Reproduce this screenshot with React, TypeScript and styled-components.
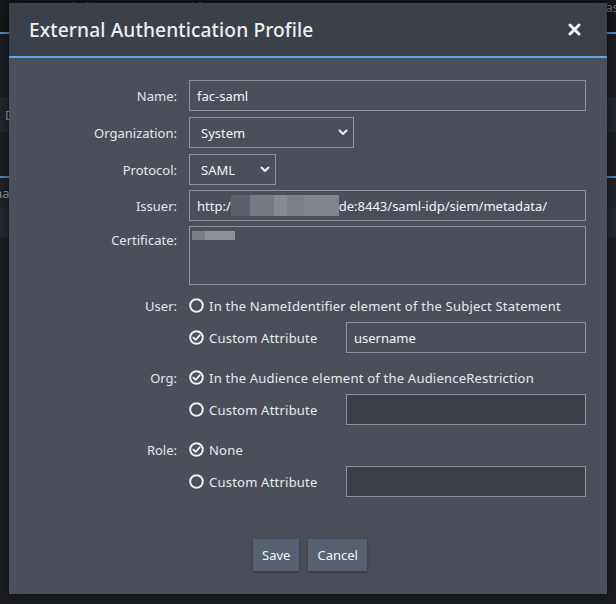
import React from 'react';
import styled, { createGlobalStyle } from 'styled-components';

const Global = createGlobalStyle`
  html, body { margin: 0; padding: 0; background: #1c1e23; }
  body { font-family: "Noto Sans", "DejaVu Sans", sans-serif; }
  #root { width: 616px; height: 604px; }
  * { box-sizing: border-box; }
`;

const Page = styled.div`
  position: relative;
  width: 616px;
  height: 604px;
  overflow: hidden;
  background: #1c1e23;
  display: flex;
  flex-direction: column;
`;

const TopNav = styled.div`
  height: 34px;
  flex: none;
  background: #16181c;
  border-bottom: 2px solid #4f8fd0;
  display: flex;
  gap: 70px;
  padding: 1px 0 0 55px;
  color: #70737a;
  font-size: 12px;
  line-height: 14px;
  overflow: hidden;
`;

const NavItem = styled.span`
  white-space: nowrap;
`;

const BackRow = styled.div<{ $bg: string; $h: number; $line?: boolean }>`
  height: ${(p) => p.$h}px;
  flex: none;
  background: ${(p) => p.$bg};
  border-bottom: ${(p) => (p.$line ? '2px solid #4a86c4' : 'none')};
  display: flex;
  align-items: center;
  color: #9a9da3;
  font-size: 13px;
  overflow: hidden;
`;

const BackText = styled.span<{ $x: number }>`
  margin-left: ${(p) => p.$x}px;
  white-space: nowrap;
`;

const Modal = styled.div`
  position: absolute;
  left: 9px;
  top: 3px;
  width: 598px;
  height: 591px;
  background: #4a4f5a;
  box-shadow: 0 0 12px rgba(0, 0, 0, 0.55);
  display: flex;
  flex-direction: column;
`;

const Header = styled.div`
  height: 55px;
  flex: none;
  background: #3b4049;
  border-bottom: 2px solid #5ea6ea;
  display: flex;
  align-items: center;
  justify-content: space-between;
  padding: 0 26px 0 20px;
`;

const Title = styled.h1`
  margin: 0;
  font-size: 19.2px;
  font-weight: 500;
  color: #eceef1;
  letter-spacing: 0.1px;
`;

const CloseButton = styled.button`
  border: none;
  background: none;
  padding: 0;
  width: 14px;
  height: 14px;
  display: flex;
  align-items: center;
  justify-content: center;
  cursor: pointer;
`;

const Body = styled.div`
  padding: 22px 21px 0 0;
  display: flex;
  flex-direction: column;
`;

const Row = styled.div<{ $mb: number; $top?: boolean }>`
  display: flex;
  align-items: ${(p) => (p.$top ? 'flex-start' : 'center')};
  margin-bottom: ${(p) => p.$mb}px;
`;

const Label = styled.label<{ $pt?: number }>`
  width: 180px;
  flex: none;
  padding-right: 12px;
  padding-top: ${(p) => p.$pt ?? 0}px;
  text-align: right;
  color: #e4e6ea;
  font-size: 13px;
`;

const TextBox = styled.div<{ $w: number; $dark?: boolean }>`
  width: ${(p) => p.$w}px;
  height: 31px;
  border: 1px solid #8e929b;
  background: ${(p) => (p.$dark ? '#3d4048' : '#4a4f5a')};
  color: #f4f5f7;
  font-size: 13px;
  padding: 0 7px;
  display: flex;
  align-items: center;
  white-space: nowrap;
  overflow: hidden;
`;

const TextArea = styled.div`
  width: 397px;
  height: 59px;
  border: 1px solid #8e929b;
  background: #4a4f5a;
  padding: 4px 2px;
`;

const Redact = styled.span<{ $w: number; $h: number }>`
  display: inline-block;
  width: ${(p) => p.$w}px;
  height: ${(p) => p.$h}px;
  flex: none;
  background: linear-gradient(
    90deg,
    #5d616b 0 18%,
    #767a83 18% 40%,
    #858990 40% 52%,
    #7b7f88 52% 68%,
    #81858d 68% 100%
  );
`;

const CertRedact = styled.span`
  display: block;
  width: 43px;
  height: 9px;
  background: linear-gradient(90deg, #7a7e86 0 30%, #8c9097 30% 100%);
`;

const Select = styled.div<{ $w: number }>`
  width: ${(p) => p.$w}px;
  height: 31px;
  border: 1px solid #8e929b;
  background: #4a4f5a;
  color: #f4f5f7;
  font-size: 13px;
  padding: 0 5px 0 11px;
  display: flex;
  align-items: center;
  justify-content: space-between;
`;

const Option = styled.div<{ $w?: number }>`
  display: flex;
  align-items: center;
  gap: 5px;
  width: ${(p) => (p.$w ? `${p.$w}px` : 'auto')};
  flex: none;
  color: #e8eaed;
  font-size: 13px;
  letter-spacing: 0.22px;
  height: 31px;
`;

const Buttons = styled.div`
  display: flex;
  justify-content: center;
  gap: 9px;
  margin-top: 42px;
  padding-left: 25px;
`;

const Button = styled.button`
  height: 32px;
  padding: 0 9px;
  border: none;
  background: #566071;
  color: #f4f5f7;
  font-family: inherit;
  font-size: 13px;
  box-shadow: 0 1px 3px rgba(0, 0, 0, 0.35);
  cursor: pointer;
`;

const Chevron = () => (
  <svg width="10" height="7" viewBox="0 0 10 7">
    <polyline points="1.5,1.5 5,5 8.5,1.5" fill="none" stroke="#eef0f2" strokeWidth="2" strokeLinecap="round" strokeLinejoin="round" />
  </svg>
);

const Radio = ({ checked }: { checked?: boolean }) => (
  <svg width="15" height="15" viewBox="0 0 15 15">
    <circle cx="7.5" cy="7.5" r="6.3" fill="none" stroke="#eef0f2" strokeWidth="2" />
    {checked && (
      <polyline points="4.4,7.7 6.6,9.9 10.7,5.3" fill="none" stroke="#eef0f2" strokeWidth="1.8" strokeLinecap="round" strokeLinejoin="round" />
    )}
  </svg>
);

const CloseIcon = () => (
  <svg width="13" height="13" viewBox="0 0 13 13">
    <path d="M2 2 L11 11 M11 2 L2 11" stroke="#f2f3f5" strokeWidth="3" strokeLinecap="round" />
  </svg>
);

export default function App() {
  return (
    <Page>
      <Global />
      <TopNav>
        <NavItem>Isolation</NavItem>
        <NavItem>Incidents</NavItem>
        <NavItem>Cases</NavItem>
        <NavItem>SOAR</NavItem>
        <NavItem>UEBA</NavItem>
        <NavItem>Tasks</NavItem>
      </TopNav>
      <BackRow $bg="#1c1e23" $h={63}>
        <BackText $x={-52}>Settings</BackText>
      </BackRow>
      <BackRow $bg="#23262c" $h={35}>
        <BackText $x={5}>D</BackText>
      </BackRow>
      <BackRow $bg="#1c1e23" $h={46} $line />
      <BackRow $bg="#1f2228" $h={30}>
        <BackText $x={-30}>Format</BackText>
      </BackRow>
      <BackRow $bg="#222831" $h={30} />
      <Modal>
        <Header>
          <Title>External Authentication Profile</Title>
          <CloseButton aria-label="Close">
            <CloseIcon />
          </CloseButton>
        </Header>
        <Body>
          <Row $mb={6}>
            <Label>Name:</Label>
            <TextBox $w={397}>fac-saml</TextBox>
          </Row>
          <Row $mb={6}>
            <Label>Organization:</Label>
            <Select $w={165}>
              <span>System</span>
              <Chevron />
            </Select>
          </Row>
          <Row $mb={5}>
            <Label>Protocol:</Label>
            <Select $w={87}>
              <span>SAML</span>
              <Chevron />
            </Select>
          </Row>
          <Row $mb={5}>
            <Label>Issuer:</Label>
            <TextBox $w={397}>
              <span>http:/</span>
              <Redact $w={108} $h={21} />
              <span>de:8443/saml-idp/siem/metadata/</span>
            </TextBox>
          </Row>
          <Row $mb={5} $top>
            <Label $pt={5}>Certificate:</Label>
            <TextArea>
              <CertRedact />
            </TextArea>
          </Row>

          <Row $mb={1}>
            <Label>User:</Label>
            <Option>
              <Radio />
              <span>In the NameIdentifier element of the Subject Statement</span>
            </Option>
          </Row>
          <Row $mb={9}>
            <Label />
            <Option $w={157}>
              <Radio checked />
              <span>Custom Attribute</span>
            </Option>
            <TextBox $w={240}>username</TextBox>
          </Row>

          <Row $mb={1}>
            <Label>Org:</Label>
            <Option>
              <Radio checked />
              <span>In the Audience element of the AudienceRestriction</span>
            </Option>
          </Row>
          <Row $mb={9}>
            <Label />
            <Option $w={157}>
              <Radio />
              <span>Custom Attribute</span>
            </Option>
            <TextBox $w={240} $dark />
          </Row>

          <Row $mb={1}>
            <Label>Role:</Label>
            <Option>
              <Radio checked />
              <span>None</span>
            </Option>
          </Row>
          <Row $mb={0}>
            <Label />
            <Option $w={157}>
              <Radio />
              <span>Custom Attribute</span>
            </Option>
            <TextBox $w={240} $dark />
          </Row>

          <Buttons>
            <Button>Save</Button>
            <Button>Cancel</Button>
          </Buttons>
        </Body>
      </Modal>
    </Page>
  );
}
